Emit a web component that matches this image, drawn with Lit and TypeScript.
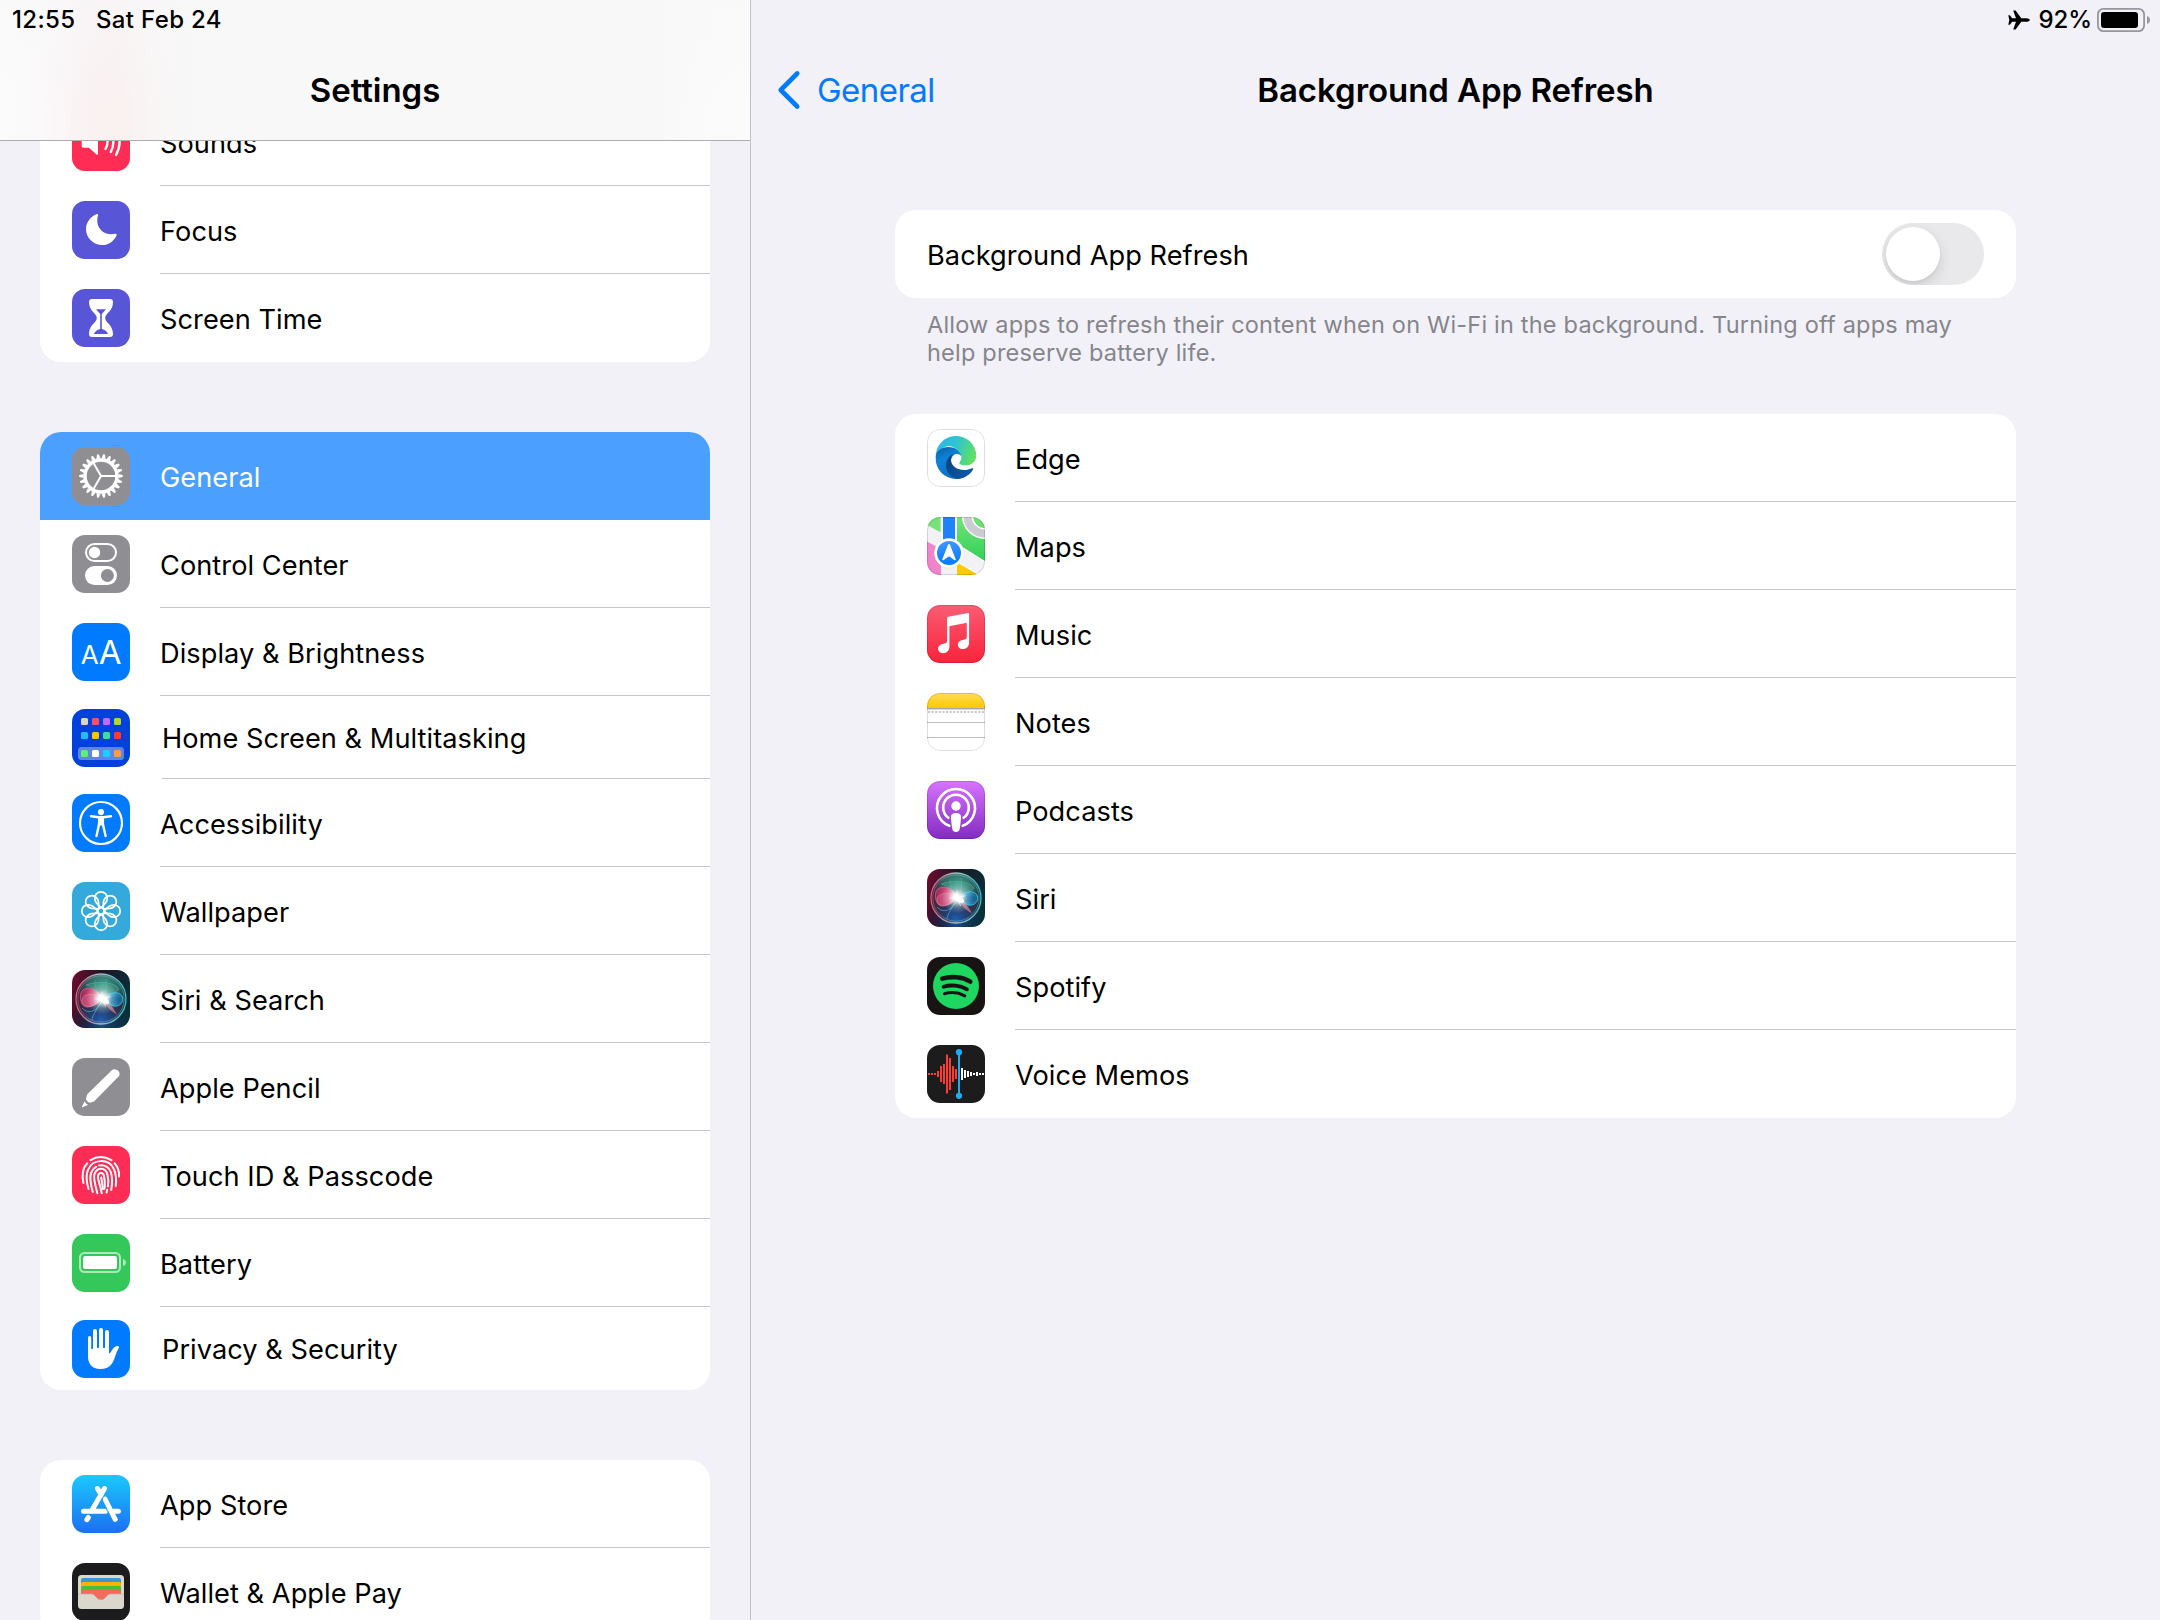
import { LitElement, html, svg, css, TemplateResult, SVGTemplateResult } from "lit";
import { customElement, property } from "lit/decorators.js";
import { classMap } from "lit/directives/class-map.js";

const polar = (cx: number, cy: number, r: number, deg: number) => {
  const a = (deg * Math.PI) / 180;
  return [(cx + r * Math.cos(a)).toFixed(2), (cy + r * Math.sin(a)).toFixed(2)];
};

const GEAR_TEETH = 22;

/* Icon artwork, each drawn inside a 58 x 58 box. */
const artwork: Record<string, () => SVGTemplateResult> = {
  sounds: () => svg`
    <rect width="58" height="58" fill="#ff2d55"/>
    <path d="M11.5 23.5H17L24.5 16.6Q26 15.6 26 17.4V40.6Q26 42.4 24.5 41.4L17 34.8H11.5Q9.7 34.8 9.7 33V25.2Q9.7 23.5 11.5 23.5Z" fill="#fff"/>
    <g fill="none" stroke="#fff" stroke-width="2.4" stroke-linecap="round">
      <path d="M33.5 22Q37.5 29 33.5 36"/><path d="M38.8 19Q44 29 38.8 39"/><path d="M44 16Q51.2 29 44 42"/>
    </g>`,
  focus: () => svg`
    <rect width="58" height="58" fill="#5856d6"/>
    <path d="M24.4 13.3C25.6 12.7 26.4 13.4 26 14.6C22.8 25 30.5 35.6 43.2 32.7C44.5 32.5 45 33.3 44.5 34.4C42 40 36.7 44 30.2 44C21.2 44 14 36.9 14 28C14 21.5 18.2 15.9 24.4 13.3Z" fill="#fff"/>`,
  hourglass: () => svg`
    <rect width="58" height="58" fill="#5856d6"/>
    <path d="M20 10H38Q41 10 41 13C41 22.5 33.2 24 33.2 29C33.2 34 41 35.5 41 45Q41 48 38 48H20Q17 48 17 45C17 35.5 24.8 34 24.8 29C24.8 24 17 22.5 17 13Q17 10 20 10Z" fill="#fff"/>
    <path d="M24 20.3H34L29.8 25V40C33 41 35 42.3 36 45H22C23 42.3 25 41 28.2 40V25Z" fill="#5856d6"/>`,
  gear: () => svg`
    <rect width="58" height="58" fill="#8e8e93"/>
    <circle cx="29" cy="29" r="16" fill="none" stroke="#fff" stroke-width="3.4"/>
    ${Array.from({ length: GEAR_TEETH }, (_, i) => svg`
      <path d="M46.5 27L50.6 28Q51.2 29 50.6 30L46.5 31Z" fill="#fff" transform="rotate(${(i * 360) / GEAR_TEETH} 29 29)"/>`)}
    ${[0, 120, 240].map((d) => {
      const [x, y] = polar(29, 29, 15, d);
      return svg`<path d="M29 29L${x} ${y}" stroke="#fff" stroke-width="2"/>`;
    })}`,
  toggles: () => svg`
    <rect width="58" height="58" fill="#8e8e93"/>
    <rect x="14" y="9" width="30" height="17" rx="8.5" fill="none" stroke="#fff" stroke-width="2"/>
    <circle cx="22.5" cy="17.5" r="5.7" fill="#fff"/>
    <rect x="13" y="31" width="32" height="19" rx="9.5" fill="#fff"/>
    <circle cx="35.4" cy="40.5" r="6.5" fill="#8e8e93"/>`,
  letters: () => svg`
    <rect width="58" height="58" fill="#007aff"/>
    <text class="aa" x="8.8" y="41" font-size="26">A</text>
    <text class="aa" x="26.7" y="41" font-size="33">A</text>`,
  home: () => {
    const rows: [number, string[]][] = [
      [9, ["#d8d5cd", "#ff4f68", "#b86eff", "#b5d334"]],
      [23, ["#1cbfff", "#ffc300", "#3ddca6", "#ff3b30"]],
      [41, ["#58f076", "#ffffff", "#18d0ff", "#ff9c42"]],
    ];
    return svg`
      <rect width="58" height="58" fill="#0040dd"/>
      <rect x="6" y="38" width="46" height="13" rx="3.5" fill="#6085e9"/>
      ${rows.map(([y, cs]) => cs.map((c, i) => svg`<rect x="${9 + i * 11}" y="${y}" width="7" height="7" rx="1.6" fill="${c}"/>`))}`;
  },
  accessibility: () => svg`
    <rect width="58" height="58" fill="#007aff"/>
    <circle cx="29" cy="29" r="21" fill="none" stroke="#fff" stroke-width="2.2"/>
    <circle cx="29" cy="18.1" r="3.1" fill="#fff"/>
    <path d="M19 22.2L26.5 23.2H31.5L39 22.2" fill="none" stroke="#fff" stroke-width="2.4" stroke-linecap="round" stroke-linejoin="round"/>
    <path d="M26 22.5H32L32.1 31.5H25.9Z" fill="#fff"/>
    <path d="M27 30.5L24.5 42M31 30.5L33.6 42" stroke="#fff" stroke-width="2.4" stroke-linecap="round"/>`,
  wallpaper: () => svg`
    <rect width="58" height="58" fill="#34aadc"/>
    <g fill="none" stroke="#fff" stroke-width="1.7" stroke-linejoin="round">
      ${Array.from({ length: 8 }, (_, i) => svg`
        <path d="M29 26L24.2 20.6Q22.8 18.6 22.8 16A6.2 6.2 0 1 1 35.2 16Q35.2 18.600 33.8 20.6Z" transform="rotate(${i * 45} 29 29)"/>`)}
      <circle cx="29" cy="29" r="3.4"/>
    </g>`,
  siri: () => svg`
    <defs>
      <linearGradient id="siri-bg" x1="0" y1="0.2" x2="1" y2="0.5">
        <stop offset="0" stop-color="#6b0b2e"/><stop offset=".45" stop-color="#1b1626"/><stop offset="1" stop-color="#08303a"/>
      </linearGradient>
      <radialGradient id="siri-green" cx=".55" cy=".2" r=".55"><stop offset="0" stop-color="#3d9c86"/><stop offset=".6" stop-color="#2a7a70" stop-opacity=".7"/><stop offset="1" stop-color="#1a5a58" stop-opacity="0"/></radialGradient>
      <radialGradient id="siri-blue" cx=".5" cy=".95" r=".5"><stop offset="0" stop-color="#1d5fb8"/><stop offset="1" stop-color="#12305e" stop-opacity="0"/></radialGradient>
      <radialGradient id="siri-core"><stop offset="0" stop-color="#fff"/><stop offset=".28" stop-color="#fff" stop-opacity=".8"/><stop offset=".6" stop-color="#e4f4f6" stop-opacity=".3"/><stop offset="1" stop-color="#cfefff" stop-opacity="0"/></radialGradient>
      <linearGradient id="siri-rim" x1="0" y1="0" x2="1" y2="0"><stop offset="0" stop-color="#c9637f"/><stop offset=".5" stop-color="#a6bcc0"/><stop offset="1" stop-color="#38bcc0"/></linearGradient>
      <linearGradient id="siri-pink" x1="0" y1="0" x2="1" y2="0"><stop offset="0" stop-color="#a02358"/><stop offset=".55" stop-color="#e8507f"/><stop offset="1" stop-color="#ffd5e0"/></linearGradient>
      <linearGradient id="siri-cyan" x1="0" y1="0" x2="1" y2="0"><stop offset="0" stop-color="#e8fbff"/><stop offset=".4" stop-color="#2f9fd8"/><stop offset="1" stop-color="#166f9f"/></linearGradient>
    </defs>
    <rect width="58" height="58" fill="url(#siri-bg)"/>
    <rect width="58" height="58" fill="url(#siri-blue)" opacity=".7"/>
    <circle cx="29" cy="29" r="24.5" fill="#4a3a50" fill-opacity=".55"/>
    <circle cx="29" cy="29" r="24.5" fill="url(#siri-green)"/>
    <circle cx="29" cy="29" r="24.5" fill="url(#siri-blue)"/>
    <path d="M14 15C24 11 42 11 47 19C43 25 36 27 31 28C27 22 21 17 14 15Z" fill="#58b8a4" fill-opacity=".3" stroke="#7fd0bd" stroke-opacity=".5" stroke-width=".6"/>
    <path d="M23 10Q22 20 31 28Q36 18 34 9" fill="none" stroke="#8fd8c8" stroke-opacity=".4" stroke-width=".6"/>
    <path d="M31 29C36 31 41 37 45 44.5C38 41 34 36 31 29Z" fill="#d0708a" fill-opacity=".8"/>
    <path d="M31 28C26 19 15 15 10 21C7 25 8 34 13 36C20 38 26 34 31 28Z" fill="url(#siri-pink)" fill-opacity=".9" stroke="#f08aa6" stroke-opacity=".7" stroke-width=".7"/>
    <path d="M31 28C24 24 13 22 10 29C9 35 13 38 17 37C24 35 27 32 31 28Z" fill="#ff86a8" fill-opacity=".25" stroke="#ffb3c8" stroke-opacity=".5" stroke-width=".6"/>
    <path d="M31 28C27 40 17 46 10 38M31 29C26 37 20 46 20 50" fill="none" stroke="#56c0e0" stroke-width=".9" opacity=".7"/>
    <path d="M31 29C36 23 46 20 50 26C53 32 47 37 42 36C38 35 34 33 31 29Z" fill="url(#siri-cyan)" fill-opacity=".75" stroke="#35c4ea" stroke-width=".9"/>
    <path d="M33 29C39 25 46 26 49 30C45 34 38 34 33 29Z" fill="#0f5f9a" fill-opacity=".55"/>
    <circle cx="30.5" cy="28.5" r="16" fill="url(#siri-core)"/>
    <ellipse cx="31.5" cy="29.5" rx="6.5" ry="3" fill="#fff" fill-opacity=".95" transform="rotate(35 31.5 29.5)"/>
    <path d="M30 21L32 27L40 26.500L33 30L34 38L29.500 31L22 29L28 27Z" fill="#fff" fill-opacity=".55"/>
    <circle cx="29" cy="29" r="25" fill="none" stroke="url(#siri-rim)" stroke-width="1.3"/>
    <circle cx="29" cy="29" r="23.2" fill="none" stroke="url(#siri-rim)" stroke-width=".7" opacity=".7"/>`,
  pencil: () => svg`
    <rect width="58" height="58" fill="#8e8e93"/>
    <path d="M39.6 12.5C43.5 8.8 50.3 14.6 46.6 18.6L22.5 43Q21.5 44 20 44.2L17.5 44.8Q13.6 42.5 14 40.5L15 37.2Q15.3 36.3 16 35.6Z" fill="#fff"/>
    <path d="M12.6 43.3Q14 46.2 16.2 46.8L10.6 49.2Q9.7 49.4 10 48.5Z" fill="#fff"/>`,
  fingerprint: () => svg`
    <rect width="58" height="58" fill="#ff2d55"/>
    <g fill="none" stroke="#fff" stroke-width="2" stroke-linecap="round">
      <path d="M18.5 14.2Q28.5 7.8 39.5 14.2"/>
      <path d="M15.2 17.3C10.8 22 9.8 29.5 11.4 37"/>
      <path d="M42.7 17.3C46 21 47.3 25.5 47.1 30.5"/>
      <path d="M16.5 43C14.5 36 13.5 29 16.2 23.5C20.5 12.8 36.5 12.2 41.6 22.5C44 27.5 44.5 33.5 43.8 40"/>
      <path d="M20.8 46C18.5 38 17.2 31.5 19.3 26.5C20.3 24 22 22 24.2 20.7"/>
      <path d="M27 19.5C32.5 18.3 37.5 21.3 39 26.5C40.3 31.5 40.3 38 39.2 44"/>
      <path d="M25.4 47.3C23 38.5 21 32 22.5 28C25.5 20.5 33.5 21.8 35.3 28C36.5 33 36.6 37 35.9 40.5"/>
      <path d="M35.2 43.8L34.6 46.5"/>
      <path d="M29.8 47.3C28.7 41 25.5 33 26 30C27 25.6 31.3 26.5 32 30C33 35 33 42 32.2 43"/>
      <path d="M29.2 31.5C30 36 30.7 40 30.8 43"/>
    </g>`,
  battery: () => svg`
    <rect width="58" height="58" fill="#34c759"/>
    <rect x="8" y="19" width="40" height="19" rx="4.5" fill="none" stroke="#fff" stroke-opacity=".6" stroke-width="2"/>
    <rect x="11" y="22" width="34" height="13" rx="2.2" fill="#fff"/>
    <path d="M51 25Q54 26 54 28.5Q54 31 51 32Z" fill="#fff" fill-opacity=".6"/>`,
  hand: () => svg`
    <rect width="58" height="58" fill="#007aff"/>
    <path d="M16 17.5A1.5 1.5 0 0 1 19.2 17.5V28.5Q20 29.8 21 28.5V11A1.9 1.9 0 0 1 25 11V27.5Q26 28.8 27 27.5V10A2 2 0 0 1 31 10V27.5Q32 28.8 33 27.5V12A2 2 0 0 1 37 12V33Q38 33.8 38.8 32L41 28.5Q43 25.5 46 26Q47.9 26.3 46.8 28C43.5 33 43.5 38 40 43.5Q36.5 49 28 49C20 49 16 43.5 16 36.5Z" fill="#fff"/>`,
  appstore: () => svg`
    <defs><linearGradient id="store-bg" x1="0" y1="0" x2="0" y2="1"><stop offset="0" stop-color="#1ac9fd"/><stop offset="1" stop-color="#1d6ff2"/></linearGradient></defs>
    <rect width="58" height="58" fill="url(#store-bg)"/>
    <g fill="none" stroke="#fff" stroke-width="5" stroke-linecap="round">
      <path d="M32.5 13.5L19.5 36"/><path d="M25.5 13.5L29 19.5"/>
      <path d="M33 24L43.2 44.3"/><path d="M11.5 36.3H33.5"/><path d="M41.5 36.3H46.4"/>
      <path d="M16.3 42.5L14.9 44.6"/>
    </g>
    <path d="M31.3 22.5L30 25.5L38 41" fill="none" stroke="#1c9cf8" stroke-width=".9"/>`,
  wallet: () => svg`
    <rect width="58" height="58" fill="#1c1c1e"/>
    <rect x="6" y="12" width="46" height="34" rx="3.5" fill="#dad8cc"/>
    <path d="M9 31V17Q9 15 11 15H47Q49 15 49 17V31Z" fill="#3e97d1"/>
    <path d="M9 31V21Q9 19 11 19H47Q49 19 49 21V31Z" fill="#ffb102"/>
    <path d="M9 31V25Q9 23 11 23H47Q49 23 49 25V31Z" fill="#4bbf37"/>
    <path d="M9 31V29Q9 27 11 27H47Q49 27 49 29V31H39C36.5 31 35.5 32.2 34 34C31 37.8 27 37.8 24 34C22.5 32.2 21.5 31 19 31Z" fill="#f46a5c"/>
    <path d="M6 31H19C21.5 31 22.5 32.2 24 34C27 37.8 31 37.8 34 34C35.5 32.2 36.5 31 39 31H52" fill="none" stroke="#b8b4a8" stroke-width=".6"/>`,
  edge: () => svg`
    <defs>
      <linearGradient id="edge-top" x1="0" y1=".3" x2="1" y2=".6"><stop offset="0" stop-color="#2cb6ea"/><stop offset=".45" stop-color="#2fc5d0"/><stop offset="1" stop-color="#62e25b"/></linearGradient>
      <linearGradient id="edge-mid" x1=".2" y1="0" x2=".6" y2="1"><stop offset="0" stop-color="#0f63ab"/><stop offset=".35" stop-color="#0b84d8"/><stop offset="1" stop-color="#1269bb"/></linearGradient>
      <linearGradient id="edge-low" x1="0" y1="0" x2="1" y2=".6"><stop offset="0" stop-color="#0b3f7e"/><stop offset="1" stop-color="#1059a8"/></linearGradient>
    </defs>
    <rect width="58" height="58" fill="#fff"/>
    <path d="M8.7 28A20.3 20.3 0 0 1 49.3 26.5C49.3 33 44 36.3 39 36.3C35 36.3 32.4 35.3 32.4 33.9C32.4 32.8 34.5 31.5 34.5 28.3C34.5 23 28 17 21 17Q12 19 8.7 28Z" fill="url(#edge-top)"/>
    <path d="M8.7 28.5C9 22 14.5 18 21.5 18C29 18 34.5 23 34.5 28C33.5 24 25.5 23 24 31C23 40 31 46 39.5 46.7C35 49.5 32 50 29.2 50A20.5 20.5 0 0 1 8.7 28.5Z" fill="url(#edge-mid)"/>
    <path d="M25 25.5C16 31 17 46.5 30.5 50C38 49.5 43.2 45.5 46.2 40.3C46.6 39.3 45.8 38.9 45 39.3C35.5 43.8 24 39 24 31Q24 27.5 26 25.3Z" fill="url(#edge-low)"/>`,
  maps: () => svg`
    <defs>
      <linearGradient id="map-green" x1="0" y1="0" x2="0" y2="1"><stop offset="0" stop-color="#75e27a"/><stop offset="1" stop-color="#30d158"/></linearGradient>
      <linearGradient id="map-blue" x1="0" y1="0" x2="0" y2="1"><stop offset="0" stop-color="#4096ff"/><stop offset="1" stop-color="#007aff"/></linearGradient>
    </defs>
    <rect width="58" height="58" fill="#f1f1f6"/>
    <path d="M0 0H13.5V15.3L0 8Z" fill="#75e27a"/>
    <path d="M0 24.5L14 32V58H0Z" fill="#f084cb"/>
    <path d="M30 0H58V44L30 26.5Z" fill="url(#map-green)"/>
    <path d="M30 45.5L51.5 58H30Z" fill="#fecb00"/>
    <path d="M30.5 44.5L53 58M58 45L30 27.5" stroke="#fff" stroke-width="1" fill="none"/>
    <circle cx="58" cy="-1" r="17.5" fill="none" stroke="#fff" stroke-width="11"/>
    <circle cx="58" cy="-1" r="17.5" fill="none" stroke="#cbcbd1" stroke-width="8"/>
    <rect x="14" y="0" width="16" height="30" fill="#fff"/>
    <rect x="16" y="0" width="12" height="26" fill="#1f82fb"/>
    <circle cx="22" cy="36" r="15.5" fill="#000" fill-opacity=".05"/>
    <circle cx="22" cy="36" r="14.8" fill="#fff"/>
    <circle cx="22" cy="36" r="12" fill="url(#map-blue)"/>
    <path d="M21 27.7Q22 26.2 23 27.7L28.7 42.3Q29 43.7 27.5 43.2L22.8 39.8Q22 39.3 21.2 39.8L16.5 43.2Q15 43.7 15.3 42.3Z" fill="#fff"/>`,
  music: () => svg`
    <defs><linearGradient id="music-bg" x1="0" y1="0" x2="0" y2="1"><stop offset="0" stop-color="#fb5c74"/><stop offset="1" stop-color="#fa233b"/></linearGradient></defs>
    <rect width="58" height="58" fill="url(#music-bg)"/>
    <path d="M41 8.1Q42.1 8 42.1 9.2V37.5C42.1 41.5 39.5 44 36 44C32.5 44 30.8 41.8 30.8 39.7C30.8 37 33 35.4 35.7 34.9C38.5 34.4 39.8 34.2 39.8 32V18.6Q39.8 17.7 38.9 17.9L23.3 21Q22.4 21.2 22.4 22.1V41.5C22.4 45.5 19.8 48.2 16 48.2C12.7 48.2 11 46 11 43.8C11 41.2 13 39.4 15.8 38.9C18.5 38.4 20.1 38.2 20.1 36V13.3Q20.1 12 21.3 11.7Z" fill="#fff"/>`,
  notes: () => svg`
    <defs><linearGradient id="notes-top" x1="0" y1="0" x2="0" y2="1"><stop offset="0" stop-color="#ffdc57"/><stop offset="1" stop-color="#fec800"/></linearGradient></defs>
    <rect width="58" height="58" fill="#fff"/>
    <rect width="58" height="15" fill="url(#notes-top)"/>
    <rect y="15" width="58" height="1.4" fill="#a9a7a2"/>
    <path d="M1 19H58" stroke="#c8c8c8" stroke-width="2" stroke-dasharray="2 1.6"/>
    <path d="M0 29.5H58M0 44.5H58" stroke="#bdbdc0" stroke-width="1"/>`,
  podcasts: () => svg`
    <defs><linearGradient id="pod-bg" x1="0" y1="0" x2="0" y2="1"><stop offset="0" stop-color="#d773ff"/><stop offset="1" stop-color="#832bc1"/></linearGradient></defs>
    <rect width="58" height="58" fill="url(#pod-bg)"/>
    <g fill="none" stroke="#fff" stroke-width="2.6" stroke-linecap="round">
      <path d="M22.3 44.8A19 19 0 1 1 35.7 44.8"/>
      <path d="M21.4 36.8A12.8 12.8 0 1 1 36.6 36.8"/>
    </g>
    <circle cx="29" cy="25" r="4.7" fill="#fff"/>
    <path d="M24 35.5C24 33 26.5 32 29 32C31.5 32 34 33 34 35.5C34 39 33.4 44.5 32.6 48.3C32.2 50.3 31 51 29 51C27 51 25.8 50.3 25.4 48.3C24.6 44.5 24 39 24 35.5Z" fill="#fff"/>`,
  spotify: () => svg`
    <rect width="58" height="58" fill="#191414"/>
    <circle cx="29" cy="29" r="23" fill="#1ed760"/>
    <g fill="none" stroke="#191414" stroke-linecap="round">
      <path d="M15.3 21.6C24 19 35.5 19.8 43.3 24.6" stroke-width="4.6"/>
      <path d="M16.6 29.7C24 27.4 33.5 28.5 40 32.3" stroke-width="3.8"/>
      <path d="M17.5 36.8C24 34.9 32 35.7 37.8 38.9" stroke-width="3"/>
    </g>`,
  voicememos: () => {
    const red = [2, 2, 2, 6, 16, 20, 39, 32, 16, 10];
    const white = [12, 8, 6, 4, 2, 4, 2, 2];
    const bar = (x: number, h: number, c: string) => svg`<rect x="${x - 1}" y="${29 - h / 2}" width="2" height="${h}" fill="${c}"/>`;
    return svg`
      <rect width="58" height="58" fill="#1c1c1c"/>
      ${red.map((h, i) => bar(2 + i * 3, h, "#ff3b30"))}
      ${white.map((h, i) => bar(35 + i * 3, h, "#ffffff"))}
      <rect x="31" y="7" width="2" height="44" fill="#1badf8"/>
      <circle cx="32" cy="7.2" r="3.1" fill="#1badf8"/><circle cx="32" cy="50.8" r="3.1" fill="#1badf8"/>`;
  },
};

interface Row {
  icon: string;
  label: string;
  selected?: boolean;
  compact?: boolean;
}

const sidebarGroups: Row[][] = [
  [
    { icon: "sounds", label: "Sounds" },
    { icon: "focus", label: "Focus" },
    { icon: "hourglass", label: "Screen Time" },
  ],
  [
    { icon: "gear", label: "General", selected: true },
    { icon: "toggles", label: "Control Center" },
    { icon: "letters", label: "Display & Brightness" },
    { icon: "home", label: "Home Screen & Multitasking", compact: true },
    { icon: "accessibility", label: "Accessibility" },
    { icon: "wallpaper", label: "Wallpaper" },
    { icon: "siri", label: "Siri & Search" },
    { icon: "pencil", label: "Apple Pencil" },
    { icon: "fingerprint", label: "Touch ID & Passcode" },
    { icon: "battery", label: "Battery" },
    { icon: "hand", label: "Privacy & Security", compact: true },
  ],
  [
    { icon: "appstore", label: "App Store" },
    { icon: "wallet", label: "Wallet & Apple Pay" },
  ],
];

const apps: Row[] = [
  { icon: "edge", label: "Edge" },
  { icon: "maps", label: "Maps" },
  { icon: "music", label: "Music" },
  { icon: "notes", label: "Notes" },
  { icon: "podcasts", label: "Podcasts" },
  { icon: "siri", label: "Siri" },
  { icon: "spotify", label: "Spotify" },
  { icon: "voicememos", label: "Voice Memos" },
];

const rimmed = new Set(["edge", "notes", "maps", "music", "podcasts"]);

@customElement("settings-list")
export class SettingsList extends LitElement {
  @property({ attribute: false }) rows: Row[] = [];

  static styles = css`
    :host {
      display: block;
      overflow: hidden;
      border-radius: 21px;
      background: #fff;
    }
    .row {
      display: flex;
      height: 88px;
      padding-left: 32px;
    }
    .icon {
      flex: none;
      width: 58px;
      height: 58px;
      margin-top: 15px;
      border-radius: 13px;
      overflow: hidden;
    }
    .icon svg {
      display: block;
    }
    .body {
      flex: 1;
      box-sizing: border-box;
      margin-left: 30px;
      padding-top: 2px;
      border-bottom: 1px solid #c6c6c8;
      line-height: 87px;
      font-size: 27.2px;
      letter-spacing: 0.05px;
      white-space: nowrap;
      color: #000;
    }
    .row:last-child .body {
      border-bottom-color: transparent;
    }
    .compact {
      height: 83px;
    }
    .compact .icon {
      margin-top: 13px;
    }
    .compact .body {
      margin-left: 32px;
      padding-top: 1px;
      line-height: 83px;
    }
    .selected {
      background: #4ba0ff;
    }
    .selected .body {
      border-bottom-color: transparent;
      color: #fff;
    }
    .rim {
      stroke: rgba(0, 0, 0, 0.13);
    }
    .aa {
      font-family: Inter, "Liberation Sans", sans-serif;
      fill: #fff;
    }
  `;

  render(): TemplateResult {
    return html`${this.rows.map(
      (r) => html`
        <div class=${classMap({ row: true, selected: !!r.selected, compact: !!r.compact })}>
          <div class="icon">
            <svg width="58" height="58" viewBox="0 0 58 58">
              ${artwork[r.icon]()}
              ${rimmed.has(r.icon) ? svg`<rect class="rim" x=".5" y=".5" width="57" height="57" rx="12.5" fill="none"/>` : ""}
            </svg>
          </div>
          <div class="body">${r.label}</div>
        </div>
      `
    )}`;
  }
}

@customElement("app-root")
export class AppRoot extends LitElement {
  static styles = css`
    :host {
      display: flex;
      width: 2160px;
      height: 1620px;
      overflow: hidden;
      background: #f2f1f7;
      color: #000;
      font-family: Inter, "Liberation Sans", sans-serif;
    }
    .sidebar {
      display: flex;
      flex-direction: column;
      width: 750px;
      border-right: 1px solid #c2c2c6;
      overflow: hidden;
    }
    .bar {
      flex: none;
      box-sizing: border-box;
      height: 141px;
      border-bottom: 1px solid #acacaf;
      background:
        linear-gradient(to bottom, rgba(248, 248, 249, 0.6), rgba(248, 248, 249, 0) 80%),
        linear-gradient(to right, #fbfbfc 0, #fbf9fa 40px, #faf2f3 85px, #faf0f0 115px, #f9f5f5 150px, #f8f8f8 200px, #f8f8f9 660px, #fafafb 700px, #fbfbfc 750px);
    }
    .status {
      display: flex;
      align-items: center;
      height: 39px;
      font-size: 24px;
      font-weight: 500;
    }
    .left {
      gap: 20.5px;
      padding-left: 12px;
      letter-spacing: 0.35px;
    }
    .right {
      justify-content: flex-end;
      padding-right: 10px;
    }
    .title {
      font-size: 33px;
      font-weight: 600;
      line-height: 102px;
      letter-spacing: -0.05px;
      text-align: center;
    }
    .groups {
      flex: 1;
      display: flex;
      flex-direction: column;
      gap: 70px;
      padding: 0 40px;
      overflow: hidden;
    }
    .groups settings-list {
      flex: none;
    }
    .groups settings-list:first-child {
      margin-top: -43px;
    }
    .pane {
      flex: 1;
    }
    .nav {
      display: grid;
      grid-template-columns: 1fr auto 1fr;
      align-items: center;
      height: 102px;
    }
    .back {
      display: flex;
      align-items: center;
      gap: 16px;
      padding-left: 26px;
      font-size: 33px;
      letter-spacing: -0.55px;
      color: #007aff;
    }
    .content {
      padding: 69px 144px 0;
    }
    .toggle-card {
      display: flex;
      align-items: center;
      justify-content: space-between;
      box-sizing: border-box;
      height: 88px;
      padding: 0 32px;
      border-radius: 21px;
      background: #fff;
      font-size: 27.2px;
      letter-spacing: 0.05px;
    }
    .caption {
      padding-top: 2px;
    }
    .switch {
      box-sizing: border-box;
      width: 102px;
      height: 62px;
      padding: 4px;
      border-radius: 31px;
      background: #e9e9eb;
      overflow: hidden;
    }
    .knob {
      width: 54px;
      height: 54px;
      border-radius: 50%;
      background: #fff;
      box-shadow: 0 5px 14px rgba(0, 0, 0, 0.12), 0 2px 3px rgba(0, 0, 0, 0.05);
    }
    .note {
      height: 116px;
      box-sizing: border-box;
      padding: 13px 32px 0;
      font-size: 23.5px;
      line-height: 28px;
      letter-spacing: 0.2px;
      color: #85858b;
    }
    .plane {
      margin-right: 9px;
    }
    .percent {
      letter-spacing: -0.1px;
    }
    .cell {
      margin-left: 5px;
    }
  `;

  render(): TemplateResult {
    return html`
      <div class="sidebar">
        <div class="bar">
          <div class="status left"><span class="time">12:55</span><span class="date">Sat Feb 24</span></div>
          <div class="title">Settings</div>
        </div>
        <div class="groups">${sidebarGroups.map((rows) => html`<settings-list .rows=${rows}></settings-list>`)}</div>
      </div>
      <div class="pane">
        <div class="status right">
          <svg class="plane" width="22" height="20" viewBox="0 0 22 20">
            <path d="M21.8 10C21.8 11.1 20 11.8 18 11.8H13.3L7.6 19.5H5.2L8 11.8H4.2L1.8 14.8H.3L1.3 10L.3 5.2H1.8L4.2 8.2H8L5.2 .5H7.6L13.3 8.2H18C20 8.2 21.8 8.9 21.8 10Z"/>
          </svg>
          <span class="percent">92%</span>
          <svg class="cell" width="53" height="24" viewBox="0 0 53 24">
            <rect x=".9" y=".9" width="46.2" height="22.2" rx="5.5" fill="none" stroke="#98979c" stroke-width="1.8"/>
            <rect x="4" y="4" width="37" height="16" rx="3" fill="#000"/>
            <path d="M50 8Q53 9.2 53 12Q53 14.8 50 16Z" fill="#98979c"/>
          </svg>
        </div>
        <div class="nav">
          <div class="back">
            <svg width="24" height="40" viewBox="0 0 24 40"><path d="M20.2 3.5L3.7 20L20.2 36.5" fill="none" stroke="#007aff" stroke-width="4.6" stroke-linecap="round" stroke-linejoin="round"/></svg>
            <span>General</span>
          </div>
          <div class="title">Background App Refresh</div>
        </div>
        <div class="content">
          <div class="toggle-card">
            <span class="caption">Background App Refresh</span>
            <div class="switch"><div class="knob"></div></div>
          </div>
          <div class="note">Allow apps to refresh their content when on Wi-Fi in the background. Turning off apps may help preserve battery life.</div>
          <settings-list .rows=${apps}></settings-list>
        </div>
      </div>
    `;
  }
}
